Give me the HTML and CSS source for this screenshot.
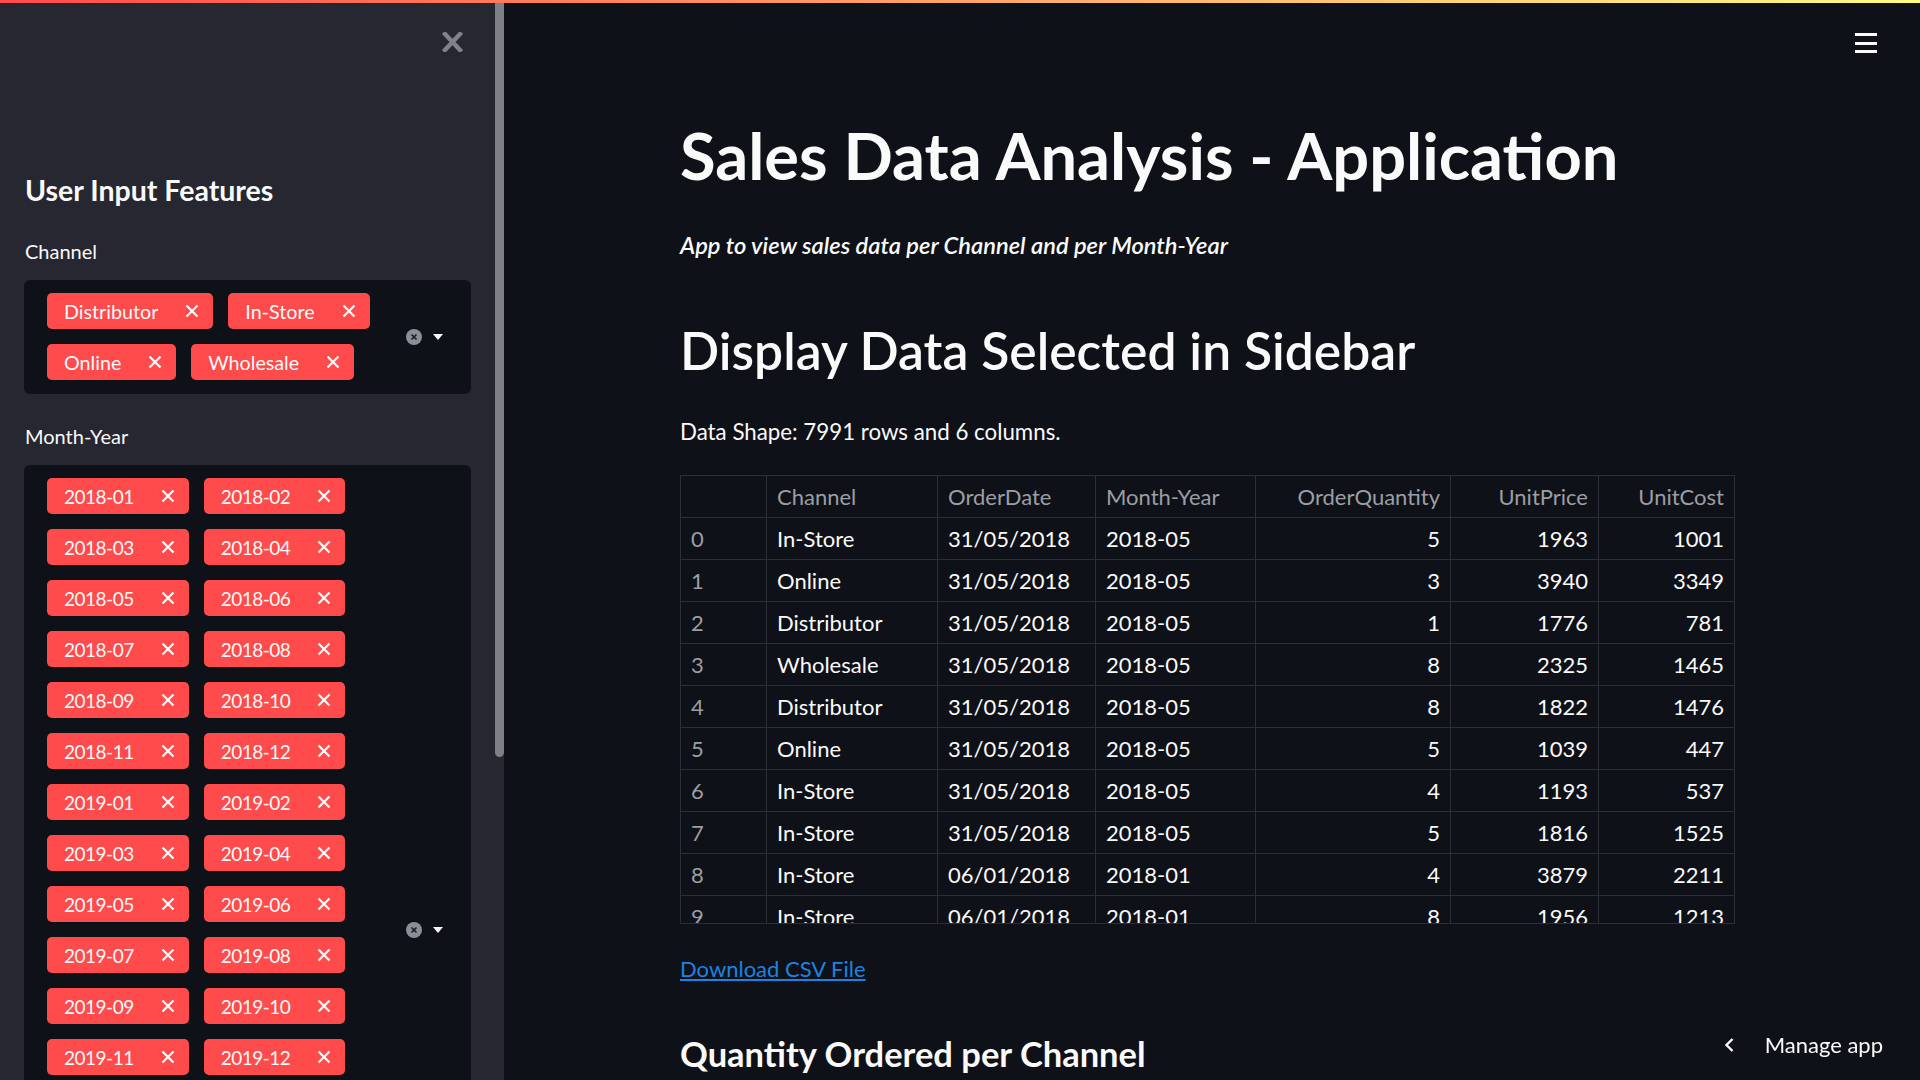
FILE: index.html
```html
<!DOCTYPE html>
<html lang="en">
<head>
<meta charset="utf-8">
<title>Sales Data Analysis - Application</title>
<link rel="stylesheet" href="styles.css">
</head>
<body>
<div class="topbar"></div>
<div class="layout">
  <aside class="sidebar">
    <div class="sidebar-content">
      <div class="sidebar-close">
        <svg width="21" height="20" viewBox="0 0 21 20"><path d="M3 2 L18 18 M18 2 L3 18" stroke="#808289" stroke-width="4.4" stroke-linecap="square"/></svg>
      </div>
      <h2 class="sidebar-title">User Input Features</h2>

      <div class="field field-first">
        <label class="field-label">Channel</label>
        <div class="multiselect">
          <div class="chips">
            <span class="chip"><span class="chip-text">Distributor</span><svg class="chip-x" viewBox="0 0 14 14"><path d="M1.5 1.5 L12.5 12.5 M12.5 1.5 L1.5 12.5"/></svg></span>
            <span class="chip"><span class="chip-text">In-Store</span><svg class="chip-x" viewBox="0 0 14 14"><path d="M1.5 1.5 L12.5 12.5 M12.5 1.5 L1.5 12.5"/></svg></span>
            <span class="chip"><span class="chip-text">Online</span><svg class="chip-x" viewBox="0 0 14 14"><path d="M1.5 1.5 L12.5 12.5 M12.5 1.5 L1.5 12.5"/></svg></span>
            <span class="chip"><span class="chip-text">Wholesale</span><svg class="chip-x" viewBox="0 0 14 14"><path d="M1.5 1.5 L12.5 12.5 M12.5 1.5 L1.5 12.5"/></svg></span>
          </div>
          <div class="ms-icons">
            <svg class="clear-icon" viewBox="0 0 16 16"><circle cx="8" cy="8" r="8" fill="#8b8d98"/><path d="M5.5 5.5 L10.5 10.5 M10.5 5.5 L5.5 10.5" stroke="#1a1c23" stroke-width="1.6"/></svg>
            <svg class="caret" viewBox="0 0 10 6"><path d="M0 0 L10 0 L5 6 Z" fill="#fafafa"/></svg>
          </div>
        </div>
      </div>

      <div class="field field-second">
        <label class="field-label">Month-Year</label>
        <div class="multiselect">
          <div class="chips chips-months" id="months"></div>
          <div class="ms-icons">
            <svg class="clear-icon" viewBox="0 0 16 16"><circle cx="8" cy="8" r="8" fill="#8b8d98"/><path d="M5.5 5.5 L10.5 10.5 M10.5 5.5 L5.5 10.5" stroke="#1a1c23" stroke-width="1.6"/></svg>
            <svg class="caret" viewBox="0 0 10 6"><path d="M0 0 L10 0 L5 6 Z" fill="#fafafa"/></svg>
          </div>
        </div>
      </div>
    </div>
    <div class="scroll-track"><div class="scroll-thumb"></div></div>
  </aside>

  <main class="main">
    <header class="main-header">
      <svg class="hamburger" viewBox="0 0 22 20"><rect x="0" y="0" width="22" height="3" fill="#fafafa"/><rect x="0" y="9" width="22" height="3" fill="#fafafa"/><rect x="0" y="17" width="22" height="3" fill="#fafafa"/></svg>
    </header>
    <div class="block">
      <h1 class="title">Sales Data Analysis - Application</h1>
      <p class="subtitle"><em>App to view sales data per Channel and per Month-Year</em></p>
      <h2 class="section">Display Data Selected in Sidebar</h2>
      <p class="shape">Data Shape: 7991 rows and 6 columns.</p>
      <div class="table-wrap">
        <table class="data">
          <colgroup>
            <col style="width:86px"><col style="width:171px"><col style="width:158px"><col style="width:160px"><col style="width:195px"><col style="width:148px"><col style="width:136px">
          </colgroup>
          <thead>
            <tr><th></th><th>Channel</th><th>OrderDate</th><th>Month-Year</th><th class="num">OrderQuantity</th><th class="num">UnitPrice</th><th class="num">UnitCost</th></tr>
          </thead>
          <tbody>
            <tr><td class="idx">0</td><td>In-Store</td><td>31/05/2018</td><td>2018-05</td><td class="num">5</td><td class="num">1963</td><td class="num">1001</td></tr>
            <tr><td class="idx">1</td><td>Online</td><td>31/05/2018</td><td>2018-05</td><td class="num">3</td><td class="num">3940</td><td class="num">3349</td></tr>
            <tr><td class="idx">2</td><td>Distributor</td><td>31/05/2018</td><td>2018-05</td><td class="num">1</td><td class="num">1776</td><td class="num">781</td></tr>
            <tr><td class="idx">3</td><td>Wholesale</td><td>31/05/2018</td><td>2018-05</td><td class="num">8</td><td class="num">2325</td><td class="num">1465</td></tr>
            <tr><td class="idx">4</td><td>Distributor</td><td>31/05/2018</td><td>2018-05</td><td class="num">8</td><td class="num">1822</td><td class="num">1476</td></tr>
            <tr><td class="idx">5</td><td>Online</td><td>31/05/2018</td><td>2018-05</td><td class="num">5</td><td class="num">1039</td><td class="num">447</td></tr>
            <tr><td class="idx">6</td><td>In-Store</td><td>31/05/2018</td><td>2018-05</td><td class="num">4</td><td class="num">1193</td><td class="num">537</td></tr>
            <tr><td class="idx">7</td><td>In-Store</td><td>31/05/2018</td><td>2018-05</td><td class="num">5</td><td class="num">1816</td><td class="num">1525</td></tr>
            <tr><td class="idx">8</td><td>In-Store</td><td>06/01/2018</td><td>2018-01</td><td class="num">4</td><td class="num">3879</td><td class="num">2211</td></tr>
            <tr><td class="idx">9</td><td>In-Store</td><td>06/01/2018</td><td>2018-01</td><td class="num">8</td><td class="num">1956</td><td class="num">1213</td></tr>
          </tbody>
        </table>
      </div>
      <p class="download"><a href="#">Download CSV File</a></p>
      <h3 class="subsection">Quantity Ordered per Channel</h3>
    </div>
  </main>
</div>

<div class="manage-app">
  <svg class="chevron" viewBox="0 0 10 14"><path d="M8.5 1 L2.5 7 L8.5 13" fill="none" stroke="#fafafa" stroke-width="2.4"/></svg>
  <span>Manage app</span>
</div>

<script src="app.js"></script>
</body>
</html>
```

FILE: app.js
```js
(function () {
  var box = document.getElementById('months');
  var html = '';
  var years = [2018, 2019, 2020];
  years.forEach(function (y) {
    for (var m = 1; m <= 12; m++) {
      var label = y + '-' + (m < 10 ? '0' + m : m);
      html += '<span class="chip"><span class="chip-text">' + label +
        '</span><svg class="chip-x" viewBox="0 0 14 14"><path d="M1.5 1.5 L12.5 12.5 M12.5 1.5 L1.5 12.5"/></svg></span>';
    }
  });
  box.innerHTML = html;
})();
```

FILE: styles.css
```css
* { box-sizing: border-box; }

html, body {
  margin: 0;
  padding: 0;
  width: 1920px;
  height: 1080px;
  overflow: hidden;
  background: #0e1117;
  color: #fafafa;
  font-family: Lato, "Noto Sans", sans-serif;
}

.topbar {
  height: 3px;
  background: linear-gradient(90deg, #ff4b4b, #fffd80);
}

.layout {
  display: flex;
  height: 1077px;
}

/* ---------- Sidebar ---------- */
.sidebar {
  width: 504px;
  flex: none;
  display: flex;
  background: #262730;
}

.sidebar-content {
  width: 495px;
  padding: 0 24px;
  overflow: hidden;
}

.scroll-track {
  width: 9px;
  flex: none;
}

.scroll-thumb {
  height: 754px;
  background: #7f7f87;
  border-radius: 0 0 5px 5px;
}

.sidebar-close {
  display: flex;
  justify-content: flex-end;
  padding: 29px 8px 0 0;
}

.sidebar-close svg {
  width: 21px;
  height: 20px;
  display: block;
}

.sidebar-title {
  margin: 121px 0 0 1px;
  font-size: 28.5px;
  line-height: 1.2;
  font-weight: 700;
}

.field-first { margin-top: 32px; }
.field-second { margin-top: 30px; }

.field-label {
  display: block;
  font-size: 20px;
  line-height: 24px;
  margin: 0 0 17px 1px;
}

.multiselect {
  display: flex;
  background: #0e1117;
  border-radius: 6px;
}

.chips {
  flex: 1;
  display: flex;
  flex-wrap: wrap;
  align-content: flex-start;
  gap: 15px;
  padding: 13px 0 14px 23px;
}

.chip {
  display: inline-flex;
  align-items: center;
  height: 36px;
  padding: 0 14px 0 17px;
  background: #ff4b4b;
  border-radius: 5px;
  font-size: 19.7px;
  color: #fafafa;
  white-space: nowrap;
}

.chips-months .chip {
  font-size: 19px;
  letter-spacing: -0.5px;
}

.chip-x {
  width: 14px;
  height: 14px;
  margin-left: 27px;
  fill: none;
  stroke: #fafafa;
  stroke-width: 2.2;
}

.ms-icons {
  display: flex;
  align-items: center;
  gap: 11px;
  padding-right: 28px;
}

.clear-icon { width: 16px; height: 16px; display: block; }
.caret { width: 10px; height: 6px; display: block; }

/* ---------- Main ---------- */
.main {
  flex: 1;
  background: #0e1117;
  min-width: 0;
}

.main-header {
  height: 57px;
  display: flex;
  justify-content: flex-end;
  align-items: flex-start;
  padding: 30px 43px 0 0;
}

.hamburger { width: 22px; height: 20px; display: block; }

.block {
  width: 1064px;
  margin: 0 auto;
  padding-top: 56px;
}

.title {
  margin: 0;
  font-size: 65px;
  line-height: 1.2;
  font-weight: 700;
}

.subtitle {
  margin: 37px 0 0;
  font-size: 23.7px;
  line-height: 1.2;
  font-weight: 600;
}

.section {
  margin: 61px 0 0;
  font-size: 51.6px;
  line-height: 1.2;
  font-weight: 600;
}

.shape {
  margin: 36.5px 0 0;
  font-size: 22.3px;
  line-height: 1.2;
}

.table-wrap {
  margin-top: 29px;
  width: fit-content;
  height: 449px;
  overflow: hidden;
  border-bottom: 1px solid #2d2f36;
}

.data {
  border-collapse: collapse;
  table-layout: fixed;
  width: 1054px;
  font-size: 22px;
}

.data th, .data td {
  border: 1px solid #2d2f36;
  height: 42px;
  padding: 0 10px;
  text-align: left;
  vertical-align: middle;
  white-space: nowrap;
  overflow: hidden;
}

.data th {
  font-weight: 400;
  color: #9c9ea4;
}

.data td.idx { color: #9c9ea4; }
.data .num { text-align: right; }

.download {
  margin: 32.5px 0 0;
  font-size: 22px;
  line-height: 1.2;
}

.download a {
  color: #1c83e1;
  text-decoration: underline;
}

.subsection {
  margin: 50.5px 0 0;
  font-size: 34.5px;
  line-height: 1.2;
  font-weight: 700;
}

.manage-app {
  position: fixed;
  right: 37px;
  bottom: 22px;
  display: flex;
  align-items: center;
  gap: 31px;
  font-size: 22px;
  line-height: 1.2;
  color: #fafafa;
}

.chevron { width: 10px; height: 14px; display: block; }
```
